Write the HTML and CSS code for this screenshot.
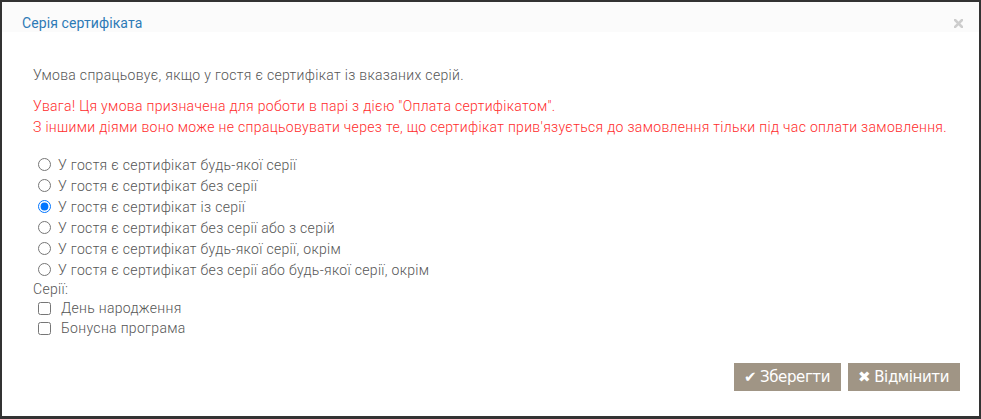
FILE: index.html
```html
<!DOCTYPE html>
<html lang="uk">
<head>
  <meta charset="UTF-8">
  <title>Серія сертифіката</title>
  <link rel="stylesheet" href="styles.css">
</head>
<body>
  <div class="modal">
    <div class="modal-header">
      <span class="modal-title">Серія сертифіката</span>
      <svg class="modal-close" width="9" height="9" viewBox="0 0 9 9">
        <path d="M1 1 L8 8 M8 1 L1 8" stroke="#cdcdcd" stroke-width="2.6" stroke-linecap="square"/>
      </svg>
    </div>

    <div class="modal-body">
      <p class="hint">Умова спрацьовує, якщо у гостя є сертифікат із вказаних серій.</p>
      <p class="warning">Увага! Ця умова призначена для роботи в парі з дією "Оплата сертифікатом".<br>
        З іншими діями воно може не спрацьовувати через те, що сертифікат прив'язується до замовлення тільки під час оплати замовлення.</p>

      <div class="options">
        <label class="option"><input type="radio" name="mode"> У гостя є сертифікат будь-якої серії</label>
        <label class="option"><input type="radio" name="mode"> У гостя є сертифікат без серії</label>
        <label class="option"><input type="radio" name="mode" checked> У гостя є сертифікат із серії</label>
        <label class="option"><input type="radio" name="mode"> У гостя є сертифікат без серії або з серій</label>
        <label class="option"><input type="radio" name="mode"> У гостя є сертифікат будь-якої серії, окрім</label>
        <label class="option"><input type="radio" name="mode"> У гостя є сертифікат без серії або будь-якої серії, окрім</label>
      </div>

      <div class="series-label">Серії:</div>
      <div class="series">
        <label class="check"><input type="checkbox"> День народження</label>
        <label class="check"><input type="checkbox"> Бонусна програма</label>
      </div>
    </div>

    <div class="modal-footer">
      <button class="btn"><span class="btn-icon">&#x2714;</span>Зберегти</button>
      <button class="btn"><span class="btn-icon">&#x2716;</span>Відмінити</button>
    </div>
  </div>
</body>
</html>
```

FILE: styles.css
```css
html, body {
  margin: 0;
  padding: 0;
  height: 100%;
  background: #333;
  font-family: 'Roboto', 'Liberation Sans', sans-serif;
}

.modal {
  margin: 2px 2px 0 2px;
  height: 414px;
  background: #fff;
  display: flex;
  flex-direction: column;
}

/* header */
.modal-header {
  height: 42px;
  background: linear-gradient(#fbfbfb 30px, #fff 30px);
  display: flex;
  align-items: center;
  justify-content: space-between;
  padding: 0 16px 0 20px;
}

.modal-title {
  font-size: 14px;
  color: #2d7ab6;
  letter-spacing: 0.1px;
}

.modal-close {
  display: block;
  margin-top: 1px;
}

/* body */
.modal-body {
  padding: 21px 31px 0 31px;
  font-size: 14px;
  font-weight: 300;
  letter-spacing: 0.32px;
  color: #555;
  flex: 1;
}

.hint {
  margin: 0;
  line-height: 21px;
}

.warning {
  margin: 10px 0 0 0;
  line-height: 21px;
  color: #ff2b2b;
}

.options {
  margin-top: 16px;
  display: flex;
  flex-direction: column;
}

.option {
  height: 21px;
  display: flex;
  align-items: center;
}

.option input {
  margin: 0 7px 0 5px;
  width: 13px;
  height: 13px;
}

.series-label {
  height: 18px;
  line-height: 18px;
}

.series {
  display: flex;
  flex-direction: column;
}

.check {
  height: 20px;
  display: flex;
  align-items: center;
}

.check input {
  margin: 0 10px 0 5px;
  width: 13px;
  height: 13px;
}

/* footer */
.modal-footer {
  display: flex;
  justify-content: flex-end;
  gap: 7px;
  padding: 0 19px 25px 0;
}

.btn {
  height: 28px;
  padding: 0 11px 0 10px;
  border: none;
  background: #a09585;
  color: #fff;
  font-family: 'DejaVu Sans', sans-serif;
  font-size: 15px;
  letter-spacing: -0.4px;
  display: flex;
  align-items: center;
  cursor: pointer;
}

.btn-icon {
  font-size: 15px;
  margin-right: 4px;
}
```
